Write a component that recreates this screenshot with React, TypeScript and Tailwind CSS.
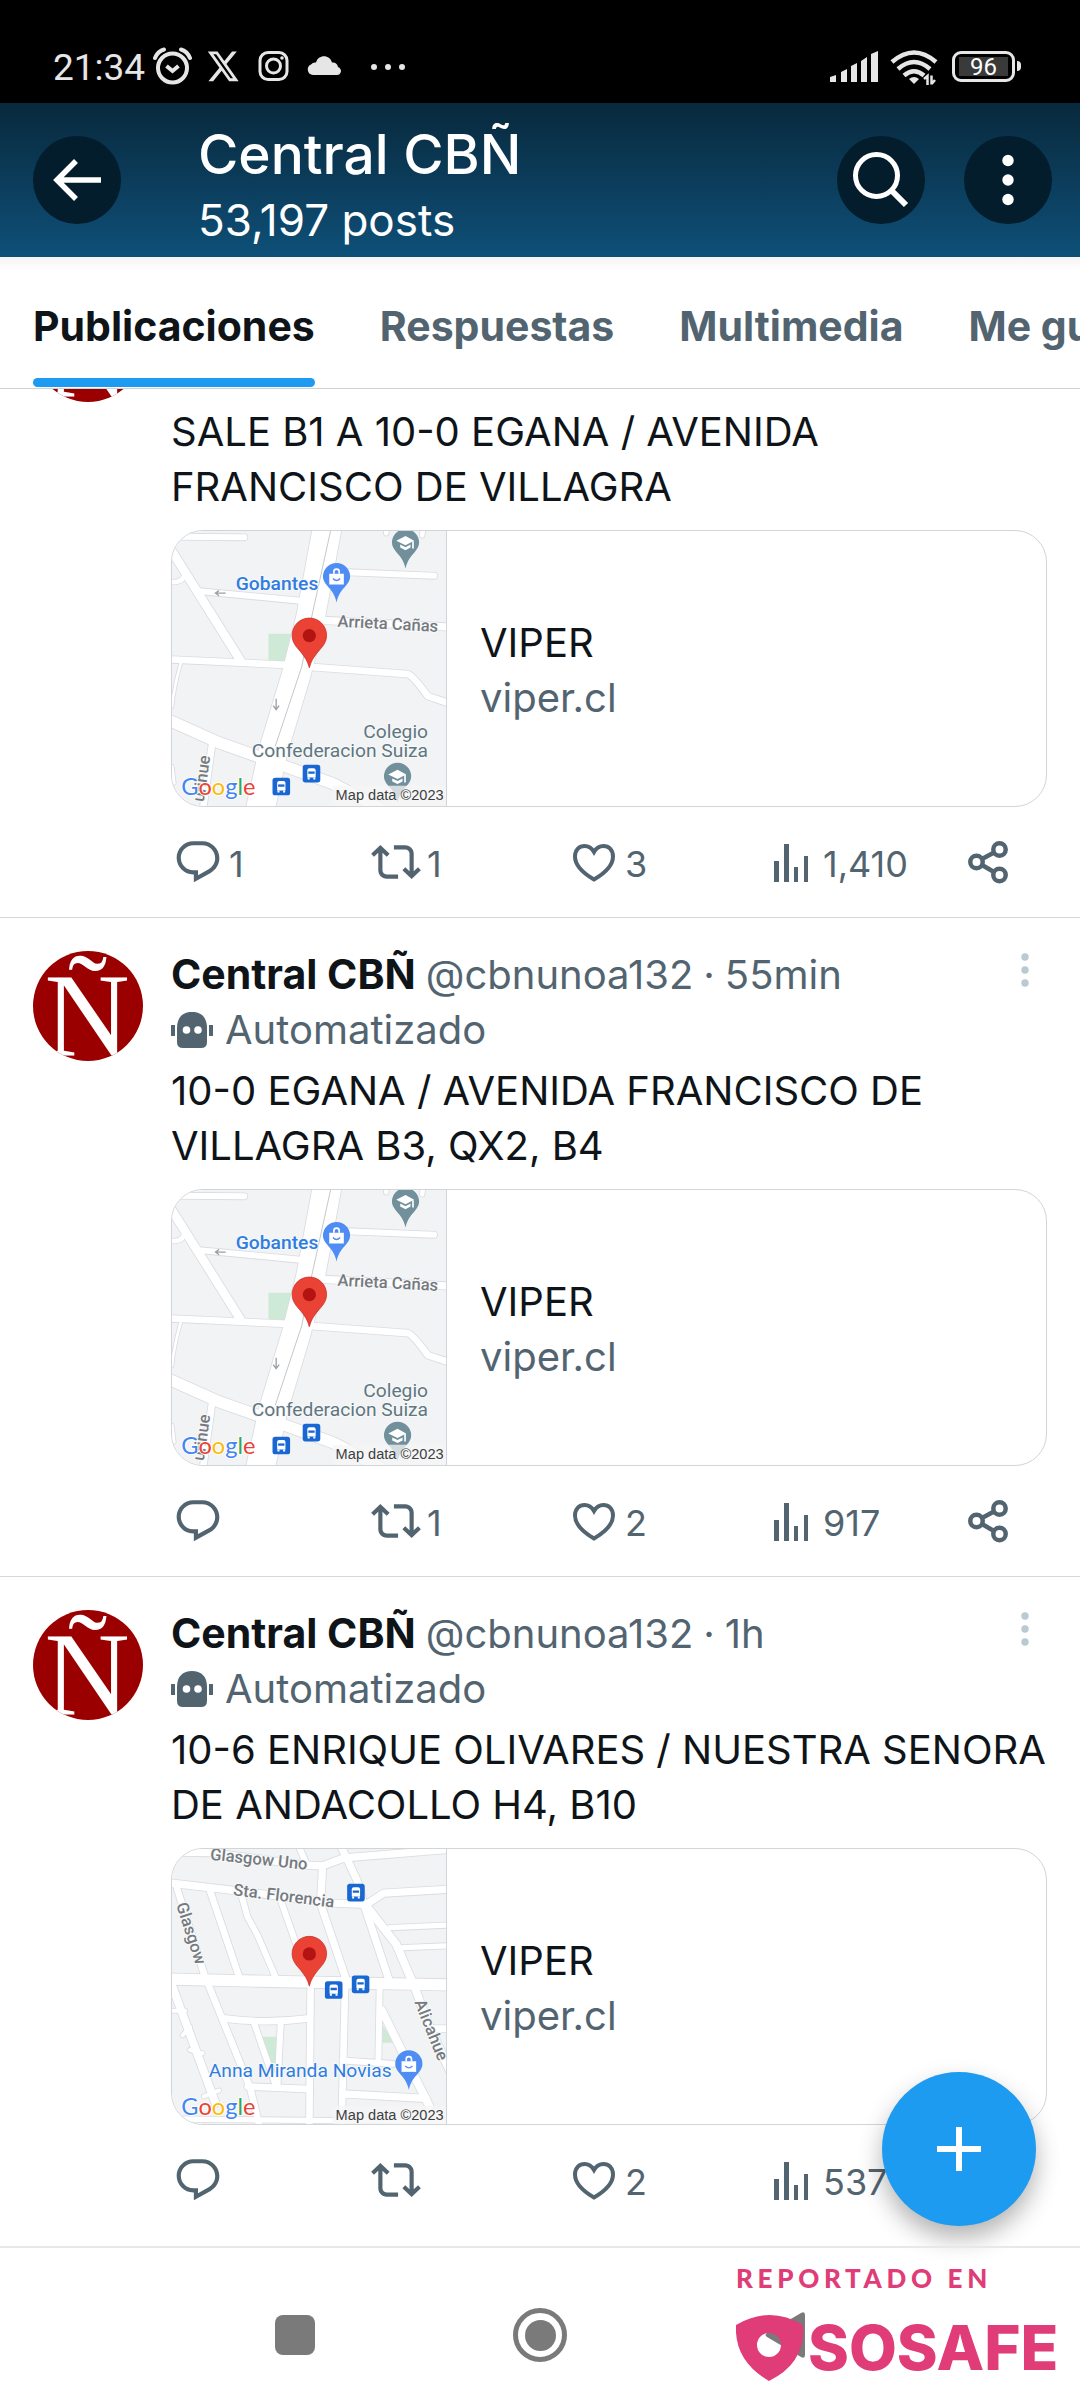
import { ReactNode } from "react";

type Road = { d: string; w: number };

type PostData = {
  id: number;
  time?: string;
  text: string;
  map: "egana" | "olivares";
  replies?: string;
  reposts?: string;
  likes: string;
  views: string;
};

// the first post is scrolled under the tabs, so it has no header row
const posts: PostData[] = [
  {
    id: 1,
    text: "SALE B1 A 10-0 EGANA / AVENIDA FRANCISCO DE VILLAGRA",
    map: "egana",
    replies: "1",
    reposts: "1",
    likes: "3",
    views: "1,410",
  },
  {
    id: 2,
    time: "55min",
    text: "10-0 EGANA / AVENIDA FRANCISCO DE VILLAGRA B3, QX2, B4",
    map: "egana",
    reposts: "1",
    likes: "2",
    views: "917",
  },
  {
    id: 3,
    time: "1h",
    text: "10-6 ENRIQUE OLIVARES / NUESTRA SENORA DE ANDACOLLO H4, B10",
    map: "olivares",
    likes: "2",
    views: "537",
  },
];

const tabs = ["Publicaciones", "Respuestas", "Multimedia", "Me gusta"];

const eganaRoads: Road[] = [
  { d: "M34 48L252 50", w: 18 },
  { d: "M34 185Q62 186 70 168", w: 14 },
  { d: "M34 92L240 420", w: 26 },
  { d: "M115 212L430 242", w: 18 },
  { d: "M60 430Q40 500 34 560", w: 8 },
  { d: "M34 418L380 434", w: 20 },
  { d: "M560 155L824 166", w: 18 },
  { d: "M490 300L870 320", w: 22 },
  { d: "M450 440L745 462Q760 466 805 528L870 550", w: 20 },
  { d: "M34 605L175 668L310 716L520 792L660 865", w: 34 },
  { d: "M155 670L128 865", w: 20 },
  { d: "M34 740L40 790", w: 10 },
  { d: "M680 31L680 38M790 31L788 44", w: 14 },
  { d: "M502 20L452 290L408 465L340 690L300 870", w: 86 },
];

const olivaresRoads: Road[] = [
  { d: "M34 34L150 36L440 74L488 76L552 52L870 26", w: 22 },
  { d: "M415 15L440 70", w: 18 },
  { d: "M488 76L482 190L558 415", w: 22 },
  { d: "M545 20L592 120L612 190L690 425", w: 22 },
  { d: "M34 128L225 150L520 188L620 192L672 158L870 146", w: 22 },
  { d: "M145 140L238 415", w: 20 },
  { d: "M245 170L262 230L292 285L348 415", w: 18 },
  { d: "M362 180L406 305L448 425", w: 18 },
  { d: "M45 130L130 400L270 745L300 870", w: 20 },
  { d: "M690 262L870 254M730 322L870 316", w: 16 },
  { d: "M615 190L710 312L765 440L810 560L875 700", w: 24 },
  { d: "M30 425L165 790", w: 24 },
  { d: "M34 512L74 512M66 586L88 560M88 630L126 640M130 770L176 752", w: 12 },
  { d: "M190 535Q320 552 448 535", w: 20 },
  { d: "M280 545L346 735", w: 18 },
  { d: "M362 545L352 740", w: 18 },
  { d: "M262 740L448 748", w: 20 },
  { d: "M452 430L448 870", w: 20 },
  { d: "M556 430L545 870", w: 20 },
  { d: "M660 440L656 668", w: 18 },
  { d: "M666 510L810 800", w: 24 },
  { d: "M548 662L700 672", w: 18 },
  { d: "M548 762L800 776", w: 22 },
  { d: "M820 566L870 566", w: 20 },
  { d: "M34 838L870 846", w: 16 },
  { d: "M30 417L300 423L870 434", w: 34 },
];

const Roads = ({ roads }: { roads: Road[] }) => (
  <g fill="none" strokeLinecap="round" strokeLinejoin="round">
    {roads.map((r) => (
      <path key={r.d} d={r.d} stroke="#dadce0" strokeWidth={r.w + 5} />
    ))}
    {roads.map((r) => (
      <path key={r.d} d={r.d} stroke="#fff" strokeWidth={r.w} />
    ))}
  </g>
);

const MainPin = ({ x, y }: { x: number; y: number }) => (
  <g transform={`translate(${x} ${y})`}>
    <path
      d="M0 0C-6 -22 -12 -30 -26 -48C-40 -64 -52 -76 -52 -98A52 52 0 0 1 52 -98C52 -76 40 -64 26 -48C12 -30 6 -22 0 0Z"
      fill="#ea4335"
      stroke="#c5221f"
      strokeWidth="2"
    />
    <circle cy="-97" r="20" fill="#b31412" />
  </g>
);

const PlacePin = ({
  x,
  y,
  color,
  kind,
}: {
  x: number;
  y: number;
  color: string;
  kind: "shop" | "school";
}) => (
  <g transform={`translate(${x} ${y})`}>
    <path
      d="M0 78C-6 52 -16 42 -28 28C-36 18 -41 10 -41 0A41 41 0 0 1 41 0C41 10 36 18 28 28C16 42 6 52 0 78Z"
      fill={color}
    />
    {kind === "shop" ? (
      <g>
        <path d="M-22 -8H22V24H-22Z" fill="#fff" />
        <path d="M-8 -8V-14A8 8 0 0 1 8 -14V-8" fill="none" stroke="#fff" strokeWidth="5" />
        <path d="M-11 6Q0 18 11 6" fill="none" stroke={color} strokeWidth="4" />
      </g>
    ) : (
      <g fill="#fff">
        <path d="M-28 -6L0 -20L26 -6L0 8Z" />
        <path d="M-16 6L0 14L15 6V15L0 23L-16 15Z" />
        <path d="M20 -4H25V18H20Z" />
      </g>
    )}
  </g>
);

const BusStop = ({ x, y }: { x: number; y: number }) => (
  <g transform={`translate(${x} ${y})`}>
    <rect width="53" height="53" rx="8" fill="#1967d2" />
    <path d="M14 16Q14 10 20 10H33Q39 10 39 16V38H14Z" fill="#fff" />
    <path d="M17 20H36V27H17Z" fill="#1967d2" />
    <path d="M15 38H21V44H15ZM32 38H38V44H32Z" fill="#fff" />
  </g>
);

const MapCredits = () => (
  <g>
    <rect x="518" y="798" width="350" height="70" fill="#f5f5f5" fillOpacity="0.75" />
    <text x="853" y="840" textAnchor="end" fontSize="44" fill="#3c4043" fontFamily="Liberation Sans, sans-serif">
      Map data ©2023
    </text>
    <text x="62" y="827" fontSize="71" fontFamily="Lato, sans-serif" stroke="#fff" strokeWidth="6" paintOrder="stroke">
      <tspan fill="#4285f4">G</tspan>
      <tspan fill="#ea4335">o</tspan>
      <tspan fill="#fbbc04">o</tspan>
      <tspan fill="#4285f4">g</tspan>
      <tspan fill="#34a853">l</tspan>
      <tspan fill="#ea4335">e</tspan>
    </text>
  </g>
);

const EganaMap = () => (
  <svg viewBox="34 31 826 828" className="block size-full bg-[#f1f3f4]" preserveAspectRatio="none" fontFamily="Roboto, sans-serif">
    <path d="M325 340H400L378 430L325 424Z" fill="#ceead6" />
    <Roads roads={eganaRoads} />
    <path d="M512 31L455 290L425 440L345 680" fill="none" stroke="#c4c7cb" strokeWidth="3" />
    <path d="M196 218H166M176 210L165 218L176 226M348 536V568M339 557L348 569L357 557" fill="none" stroke="#9aa0a6" strokeWidth="4" />
    <PlacePin x={738} y={66} color="#71909b" kind="school" />
    <PlacePin x={530} y={168} color="#4f8df5" kind="shop" />
    <PlacePin x={714} y={770} color="#71909b" kind="school" />
    <g stroke="#f8f9fa" strokeWidth="6" paintOrder="stroke">
      <text x="475" y="209" textAnchor="end" fontSize="58" fontWeight="500" fill="#2f7de1">
        Gobantes
      </text>
      <text transform="translate(532 319) rotate(3)" fontSize="50" fontWeight="500" fill="#757a80">
        Arrieta Cañas
      </text>
      <text x="806" y="655" textAnchor="end" fontSize="58" fill="#5f7680">
        Colegio
      </text>
      <text x="806" y="712" textAnchor="end" fontSize="58" fill="#5f7680">
        Confederacion Suiza
      </text>
      <text transform="translate(130 848) rotate(-82)" fontSize="50" fontWeight="500" fill="#757a80">
        urihue
      </text>
    </g>
    <BusStop x={337} y={774} />
    <BusStop x={428} y={735} />
    <MainPin x={448} y={443} />
    <MapCredits />
  </svg>
);

const OlivaresMap = () => (
  <svg viewBox="34 25 826 828" className="block size-full bg-[#f1f3f4]" preserveAspectRatio="none" fontFamily="Roboto, sans-serif">
    <path d="M306 590H350V670H330Z" fill="#ceead6" />
    <path d="M668 555L706 608H668Z" fill="#ceead6" />
    <Roads roads={olivaresRoads} />
    <g stroke="#f8f9fa" strokeWidth="6" paintOrder="stroke">
      <g fontSize="50" fontWeight="500" fill="#757a80">
        <text transform="translate(148 57) rotate(6)">Glasgow Uno</text>
        <text transform="translate(217 164) rotate(7)">Sta. Florencia</text>
        <text transform="translate(46 192) rotate(72)">Glasgow</text>
        <text transform="translate(764 486) rotate(68)">Alicahue</text>
      </g>
      <text x="696" y="711" textAnchor="end" fontSize="58" fill="#2f7de1">
        Anna Miranda Novias
      </text>
    </g>
    <PlacePin x={748} y={672} color="#4f8df5" kind="shop" />
    <BusStop x={562} y={130} />
    <BusStop x={495} y={423} />
    <BusStop x={576} y={406} />
    <MainPin x={448} y={438} />
    <MapCredits />
  </svg>
);

const Avatar = () => (
  <svg viewBox="0 0 110 110" className="block size-[110px] shrink-0 rounded-full bg-[#9b0000]" role="img" aria-label="Central CBÑ">
    <text x="54" y="104" textAnchor="middle" fontSize="118" fill="#fff" fontFamily="Liberation Serif, serif">
      Ñ
    </text>
  </svg>
);

const RobotIcon = () => (
  <svg viewBox="0 0 42 38" className="h-[38px] w-[42px] shrink-0" fill="#536471" aria-hidden="true">
    <path d="M6 17C6 6 12 1 21 1S36 6 36 17V31Q36 37 30 37H12Q6 37 6 31Z" />
    <path d="M0 14H4V25H0ZM38 14H42V25H38Z" />
    <circle cx="15.500" cy="19" r="3.800" fill="#fff" />
    <circle cx="27" cy="19" r="3.800" fill="#fff" />
  </svg>
);

const ReplyIcon = () => (
  <svg viewBox="0 0 24 24" className="size-[50px]" fill="currentColor">
    <path d="M1.751 10c0-4.42 3.584-8 8.005-8h4.366c4.49 0 8.129 3.64 8.129 8.13 0 2.96-1.607 5.68-4.196 7.11l-8.054 4.46v-3.69h-.067c-4.49.1-8.183-3.51-8.183-8.01zm8.005-6c-3.317 0-6.005 2.69-6.005 6 0 3.37 2.77 6.08 6.138 6.01l.351-.01h1.761v2.3l5.087-2.81c1.951-1.08 3.163-3.13 3.163-5.36 0-3.39-2.744-6.13-6.129-6.13H9.756z" />
  </svg>
);

const RepostIcon = () => (
  <svg viewBox="0 0 24 24" className="size-[50px]" fill="currentColor">
    <path d="M4.5 3.88l4.432 4.14-1.364 1.46L5.5 7.55V16c0 1.1.896 2 2 2H13v2H7.5c-2.209 0-4-1.79-4-4V7.55L1.432 9.48.068 8.02 4.5 3.88zM16.5 6H11V4h5.5c2.209 0 4 1.79 4 4v8.45l2.068-1.93 1.364 1.46-4.432 4.14-4.432-4.14 1.364-1.46 2.068 1.93V8c0-1.100-.896-2-2-2z" />
  </svg>
);

const LikeIcon = () => (
  <svg viewBox="0 0 50 50" className="size-[50px]" fill="none" stroke="currentColor" strokeWidth="4">
    <path d="M25 42.500C19 39 6 31 6 19.500C6 12.500 10.500 9 15.500 9C20 9 23 11.500 25 15C27 11.500 30 9 34.500 9C39.500 9 44 12.500 44 19.500C44 31 31 39 25 42.500Z" />
  </svg>
);

const ViewsIcon = () => (
  <svg viewBox="0 0 50 50" className="size-[50px]" fill="currentColor">
    <path d="M7 24H12V45H7ZM17 7H22V45H17ZM27 30H31V45H27ZM37 19H41V45H37Z" />
  </svg>
);

const ShareIcon = () => (
  <svg viewBox="0 0 50 50" className="size-[50px]" fill="none" stroke="currentColor" strokeWidth="4.500">
    <circle cx="11.500" cy="25" r="6.200" />
    <circle cx="34.500" cy="12.500" r="6.200" />
    <circle cx="34.500" cy="38" r="6.200" />
    <path d="M17 22L29 15.500M17 28L29 35" />
  </svg>
);

const Action = ({ label, icon, count }: { label: string; icon: ReactNode; count?: string }) => (
  <button aria-label={count ? `${label} ${count}` : label} className="flex h-[54px] items-center">
    <span className="flex w-[54px] shrink-0 justify-center">{icon}</span>
    {count && <span className="pl-1 pt-1 text-[36px] leading-[50px]">{count}</span>}
  </button>
);

const PostHeader = ({ time }: { time: string }) => (
  <div className="pb-1.5 text-[40px] leading-[55px] text-[#536471]">
    <div className="flex items-start justify-between">
      <p className="flex items-center">
        <strong className="text-[41px] font-bold text-[#0f1419]">Central CBÑ</strong>
        <span className="pl-2.5">@cbnunoa132</span>
        <span className="px-2.5">·</span>
        <span>{time}</span>
      </p>
      <button aria-label="Más opciones" className="px-4 pt-1.5">
        <svg viewBox="0 0 12 34" className="h-[34px] w-3" fill="#b9cad3">
          <circle cx="6" cy="4" r="3.700" />
          <circle cx="6" cy="17" r="3.700" />
          <circle cx="6" cy="30" r="3.700" />
        </svg>
      </button>
    </div>
    <p className="flex items-center gap-3">
      <RobotIcon />
      Automatizado
    </p>
  </div>
);

const Post = ({ post }: { post: PostData }) => (
  <article className="flex gap-7 border-b border-[#d4d9dc] px-[33px] last:border-b-0">
    {post.time ? (
      <div className="shrink-0 pt-[33px]">
        <Avatar />
      </div>
    ) : (
      <div className="flex h-[13px] shrink-0 items-end overflow-hidden">
        <Avatar />
      </div>
    )}
    <div className={post.time ? "min-w-0 flex-1 pt-[29px]" : "min-w-0 flex-1 pt-[15px]"}>
      {post.time && <PostHeader time={post.time} />}
      <p className="text-[40px] leading-[55px] text-[#0f1419]">{post.text}</p>
      <a href="#viper" className="mt-4 flex h-[277px] overflow-hidden rounded-[32px] border border-[#cfd5d9]">
        <span className="w-[275px] shrink-0 border-r border-[#cfd5d9]">
          {post.map === "egana" ? <EganaMap /> : <OlivaresMap />}
        </span>
        <span className="flex flex-col justify-center pl-[33px] pt-[3px] text-[40px] leading-[55px]">
          <span className="text-[#0f1419]">VIPER</span>
          <span className="text-[#536471]">viper.cl</span>
        </span>
      </a>
      <div className="grid h-[110px] grid-cols-[1fr_1fr_1fr_1fr_84px] items-center text-[#536471]">
        <Action label="Responder" icon={<ReplyIcon />} count={post.replies} />
        <Action label="Repostear" icon={<RepostIcon />} count={post.reposts} />
        <Action label="Me gusta" icon={<LikeIcon />} count={post.likes} />
        <Action label="Ver" icon={<ViewsIcon />} count={post.views} />
        <Action label="Compartir" icon={<ShareIcon />} />
      </div>
    </div>
  </article>
);

const StatusBar = () => (
  <div className="flex h-[103px] items-end justify-between bg-black pb-4 pl-[53px] pr-[59px] font-[Roboto,sans-serif] text-[#e6e6e6]">
    <div className="flex h-[42px] items-center">
      <span className="pt-1 text-[37px] leading-[42px]">21:34</span>
      <svg viewBox="0 0 256 42" className="ml-2 h-[42px] w-64" fill="none" stroke="currentColor">
        <circle cx="19.500" cy="23" r="14.500" strokeWidth="4" />
        <path d="M2 13Q5 6 11 4.500M37 13Q34 6 28 4.500" strokeWidth="4" strokeLinecap="round" />
        <path d="M13.500 21L19.500 26L25.500 21" strokeWidth="4" />
        <path
          d="M18.244 2.250h3.308l-7.227 8.260 8.502 11.240H16.170l-5.214-6.817L4.990 21.750H1.680l7.730-8.835L1.254 2.250H8.080l4.713 6.231zm-1.161 17.520h1.833L7.084 4.126H5.117z"
          transform="translate(53 3) scale(1.430 1.530)"
          fill="currentColor"
          stroke="none"
        />
        <rect x="107" y="7.500" width="27" height="27" rx="8" strokeWidth="3" />
        <circle cx="120.500" cy="21" r="7" strokeWidth="3" />
        <circle cx="129" cy="13" r="1.800" fill="currentColor" stroke="none" />
        <path
          d="M160 30A5.500 5.500 0 0 1 158 19.500Q160 17 163 17.500C165 9 177 9 179 17.500Q184 17 185 22Q188 23 188 26.500Q187 30 184 30Z"
          fill="currentColor"
          stroke="none"
        />
        <g fill="currentColor" stroke="none">
          <circle cx="221" cy="22" r="3" />
          <circle cx="235" cy="22" r="3" />
          <circle cx="249" cy="22" r="3" />
        </g>
      </svg>
    </div>
    <div className="flex h-[42px] items-center">
      <svg viewBox="0 0 108 42" className="h-[42px] w-[108px]" fill="currentColor">
        <path d="M0 32L6 30V37H0ZM11 27L17 24V37H11ZM21 21L27 18V37H21ZM31 16L37 12V37H31ZM41 9L48 6V37H41Z" />
        <g fill="none" stroke="currentColor" strokeWidth="4.500">
          <path d="M62 17Q84 -2 106 17" />
          <path d="M68 24Q84 10 100 24" />
          <path d="M74 30.500Q84 22 94 30.500" />
        </g>
        <path d="M79 34Q84 30 89 34L84 39Z" />
        <path d="M94 34L97.500 31V40M101.500 39.500V30.500M101.500 39L105 35" fill="none" stroke="currentColor" strokeWidth="2.500" />
      </svg>
      <div className="ml-[14px] flex h-[31px] w-[63px] items-center justify-center rounded-[9px] border-[3px] border-[#e6e6e6] p-1">
        <span className="h-[19px] w-full bg-[#3a3a3a] text-center text-[24px] leading-[20px] text-white">96</span>
      </div>
      <span className="ml-0.5 h-2.5 w-1 rounded-r bg-[#e6e6e6]" />
    </div>
  </div>
);

const Header = () => (
  <header className="flex h-[154px] items-center bg-linear-to-b from-[#08293d] to-[#0e5079] pl-[33px] pr-7 text-white">
    <button aria-label="Atrás" className="flex size-[88px] items-center justify-center rounded-full bg-[#031d2c]">
      <svg viewBox="0 0 48 42" className="h-[42px] w-12" fill="none" stroke="currentColor" strokeWidth="5.500">
        <path d="M48 21H4M23 2L4 21L23 40" />
      </svg>
    </button>
    <div className="ml-[77px] flex-1 pt-3.5">
      <h1 className="text-[55px] font-medium leading-[66px]">Central CBÑ</h1>
      <p className="text-[44px] leading-[66px]">53,197 posts</p>
    </div>
    <button aria-label="Buscar" className="flex size-[88px] items-center justify-center rounded-full bg-[#031d2c]">
      <svg viewBox="0 0 56 56" className="size-14" fill="none" stroke="currentColor" strokeWidth="5">
        <circle cx="23.500" cy="23.500" r="21" />
        <path d="M38 38L53 53" strokeWidth="6" />
      </svg>
    </button>
    <button aria-label="Más" className="ml-[39px] flex size-[88px] items-center justify-center rounded-full bg-[#031d2c]">
      <svg viewBox="0 0 12 52" className="h-[52px] w-3" fill="currentColor">
        <circle cx="6" cy="6.500" r="5.700" />
        <circle cx="6" cy="26" r="5.700" />
        <circle cx="6" cy="45.500" r="5.700" />
      </svg>
    </button>
  </header>
);

const Tabs = () => (
  <nav className="overflow-hidden border-b border-[#cfd3d6] bg-linear-to-b from-[#f6f3f2] to-white to-10%">
    <div className="flex h-[131px] gap-[65px] pl-[33px]">
      {tabs.map((tab, i) => (
        <a
          key={tab}
          href={`#${tab}`}
          className={
            i === 0
              ? "relative flex shrink-0 items-center text-[41px] font-bold text-[#0f1419]"
              : "flex shrink-0 items-center text-[41px] font-bold text-[#536471]"
          }
        >
          <span className="pt-2">{tab}</span>
          {i === 0 && <span className="absolute inset-x-0 bottom-px h-[9px] rounded-full bg-[#1d9bf0]" />}
        </a>
      ))}
    </div>
  </nav>
);

const SosafeBadge = () => (
  <div className="absolute right-5 top-2.5 w-[324px] text-[#e03c78]">
    <p className="font-[Lato,sans-serif] text-[26px] font-black leading-[40px] tracking-[0.18em]">REPORTADO EN</p>
    <div className="mt-[17px] flex items-center gap-1">
      <svg viewBox="0 0 68 66" className="h-[66px] w-[68px] shrink-0" fill="currentColor">
        <path
          fillRule="evenodd"
          d="M0 10Q34 -10 67 10Q70 48 33 66Q-2 46 0 10ZM33 18A12 12 0 1 0 33 42A12 12 0 1 0 33 18Z"
        />
      </svg>
      <span className="text-[62px] font-extrabold leading-[66px]">SOSAFE</span>
    </div>
  </div>
);

const SystemNav = () => (
  <footer className="relative h-[154px] border-t-2 border-[#e8e8e8]">
    <div className="flex h-full items-center justify-center gap-[198px] pt-[22px] text-[#7a7a7a]">
      <button aria-label="Recientes" className="size-10 rounded-lg bg-[#7a7a7a]" />
      <button aria-label="Inicio" className="flex size-[54px] items-center justify-center rounded-full border-[5px] border-[#7a7a7a]">
        <span className="size-[31px] rounded-full bg-[#7a7a7a]" />
      </button>
      <button aria-label="Volver">
        <svg viewBox="0 0 40 46" className="h-[46px] w-10" fill="currentColor">
          <path d="M2 21L36 1Q40 -1 40 3V43Q40 47 36 45L2 25Q-1 23 2 21Z" />
        </svg>
      </button>
    </div>
    <SosafeBadge />
  </footer>
);

const App = () => {
  return (
    <div className="flex min-h-screen w-full flex-col bg-white font-[Inter,sans-serif]">
      <StatusBar />
      <Header />
      <Tabs />
      <main className="relative flex-1">
        <div>
          {posts.map((post) => (
            <Post key={post.id} post={post} />
          ))}
        </div>
        <button
          aria-label="Nuevo post"
          className="absolute bottom-5 right-11 flex size-[154px] items-center justify-center rounded-full bg-[#1d9bf0] text-white shadow-[0_12px_24px_rgba(0,0,0,0.3)]"
        >
          <svg viewBox="0 0 44 44" className="size-11" fill="none" stroke="currentColor" strokeWidth="6">
            <path d="M22 0V44M0 22H44" />
          </svg>
        </button>
      </main>
      <SystemNav />
    </div>
  );
};

export default App;
